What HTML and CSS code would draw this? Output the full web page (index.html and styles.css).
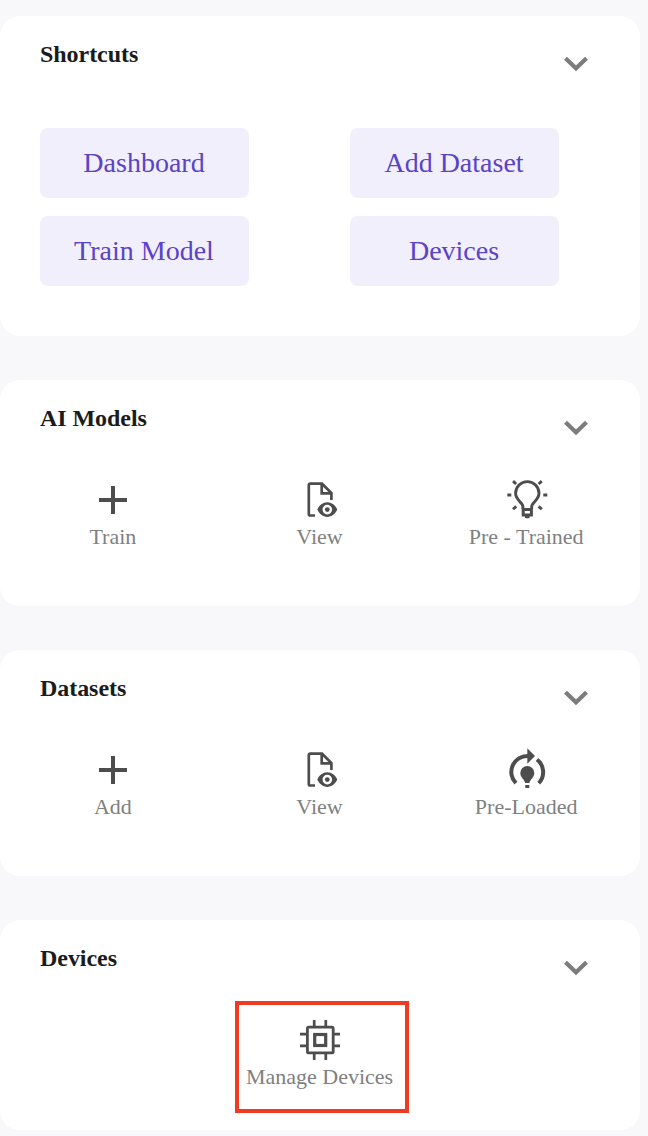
FILE: index.html
```
<!DOCTYPE html>
<html lang="en">
<head>
<meta charset="utf-8">
<title>Home</title>
<link rel="stylesheet" href="styles.css">
</head>
<body>
<svg class="symbols" aria-hidden="true">
  <symbol id="chevron" viewBox="0 0 28 28"><path d="M3.500 8.300l10.500 10L24.500 8.300" fill="none" stroke="#7c7c7c" stroke-width="4.200"/></symbol>
  <symbol id="plus" viewBox="0 0 48 48"><path d="M24 10v28M10 24h28" fill="none" stroke="currentColor" stroke-width="4"/></symbol>
  <symbol id="view" viewBox="0 0 48 48">
    <path d="M19 39.500h-4.600a1.600 1.600 0 0 1-1.600-1.600V9.300a1.600 1.600 0 0 1 1.600-1.600H26L35.400 17v7M25.700 8v9.300h9.600" fill="none" stroke="currentColor" stroke-width="2.700"/>
    <path fill-rule="evenodd" d="M21.300 33.600C23.200 29.200 27 26.300 31.300 26.300s8.100 2.900 10 7.300c-1.900 4.400-5.700 7.300-10 7.300s-8.100-2.900-10-7.300zM31.300 28.800a4.800 4.800 0 1 0 0 9.600a4.800 4.800 0 1 0 0-9.600z" fill="currentColor"/>
    <circle cx="31.300" cy="33.600" r="2.400" fill="currentColor"/>
  </symbol>
  <symbol id="bulb" viewBox="0 0 48 48">
    <path d="M19.900 33v-2.600c0-3.400-7.300-6.500-7.300-13.100a11.700 11.700 0 0 1 23.400 0c0 6.600-7.300 9.700-7.300 13.100V33" fill="none" stroke="currentColor" stroke-width="2.900"/>
    <path d="M20.200 33.500h8.200v5.600h-8.200z" fill="none" stroke="currentColor" stroke-width="3"/>
    <path d="M22 40h4.600v1.200l-1 1h-2.600l-1-1z" fill="currentColor"/>
    <path d="M4.300 19h4M40.300 19h4M10 5.100l3.200 2.900M38.800 5.100l-3.200 2.900M10 33.300l3.200-2.900M38.800 33.300l-3.200-2.900" fill="none" stroke="currentColor" stroke-width="2.900"/>
  </symbol>
  <symbol id="preloaded" viewBox="0 0 48 48">
    <path d="M12.900 37.200A16 16 0 0 1 25 10M34 13.500A16 16 0 0 1 35.700 37.200" fill="none" stroke="currentColor" stroke-width="4"/>
    <path d="M24.300 2.300v15.400L32 10z" fill="currentColor"/>
    <path d="M22.100 37C21.800 33.600 17.300 31.700 17.300 27a7 7 0 0 1 14 0c0 4.700-4.500 6.600-4.800 10zM22.300 39h4v3h-4z" fill="currentColor"/>
  </symbol>
  <symbol id="chip" viewBox="0 0 48 48">
    <rect x="11.400" y="11.100" width="25.800" height="25.800" rx="1.500" fill="none" stroke="currentColor" stroke-width="2.800"/>
    <rect x="18.700" y="18.500" width="11" height="11" fill="none" stroke="currentColor" stroke-width="3.200"/>
    <path d="M18.200 4v6M29.800 4v6M18.200 38v6M29.800 38v6M4 18.200h6M4 29.800h6M38 18.200h6M38 29.800h6" fill="none" stroke="currentColor" stroke-width="2.700"/>
  </symbol>
</svg>
<main class="panels">
  <section class="card card-shortcuts">
    <header class="card-header"><h2>Shortcuts</h2><svg class="chevron"><use href="#chevron"/></svg></header>
    <div class="shortcuts">
      <a class="shortcut">Dashboard</a>
      <a class="shortcut">Add Dataset</a>
      <a class="shortcut">Train Model</a>
      <a class="shortcut">Devices</a>
    </div>
  </section>
  <section class="card">
    <header class="card-header"><h2>AI Models</h2><svg class="chevron"><use href="#chevron"/></svg></header>
    <div class="actions">
      <a class="action"><svg class="icon"><use href="#plus"/></svg><span>Train</span></a>
      <a class="action"><svg class="icon"><use href="#view"/></svg><span>View</span></a>
      <a class="action"><svg class="icon"><use href="#bulb"/></svg><span>Pre - Trained</span></a>
    </div>
  </section>
  <section class="card">
    <header class="card-header"><h2>Datasets</h2><svg class="chevron"><use href="#chevron"/></svg></header>
    <div class="actions">
      <a class="action"><svg class="icon"><use href="#plus"/></svg><span>Add</span></a>
      <a class="action"><svg class="icon"><use href="#view"/></svg><span>View</span></a>
      <a class="action"><svg class="icon"><use href="#preloaded"/></svg><span>Pre-Loaded</span></a>
    </div>
  </section>
  <section class="card card-devices">
    <header class="card-header"><h2>Devices</h2><svg class="chevron"><use href="#chevron"/></svg></header>
    <div class="actions actions-single">
      <a class="action highlighted"><svg class="icon"><use href="#chip"/></svg><span>Manage Devices</span></a>
    </div>
  </section>
</main>
</body>
</html>
```
FILE: styles.css
```
*, *::after { box-sizing: border-box; }
body {
  margin: 0;
  background: #f8f8fb;
  font-family: "Liberation Serif", "Times New Roman", serif;
}
.symbols { position: absolute; width: 0; height: 0; }
.panels {
  display: flex;
  flex-direction: column;
  gap: 44px;
  width: 640px;
  padding: 16px 0 6px;
}
.card {
  height: 226px;
  padding-top: 24px;
  border-radius: 20px;
  background: #fff;
}
.card-shortcuts { height: 320px; }
.card-devices { height: 210px; }
.card-header {
  display: flex;
  justify-content: space-between;
  height: 72px;
  padding: 0 50px 0 40px;
}
.card-shortcuts .card-header { height: 88px; }
.card-header h2 {
  margin: 0;
  font-size: 24px;
  line-height: 28px;
  letter-spacing: -0.05px;
  color: #1b1b1b;
}
.chevron { width: 28px; height: 28px; margin-top: 10px; filter: blur(0.4px); }
.shortcuts {
  display: grid;
  grid-template-columns: 209px 209px;
  gap: 18px 101px;
  padding-left: 40px;
}
.shortcut {
  display: flex;
  align-items: center;
  justify-content: center;
  height: 70px;
  padding-right: 1px;
  border-radius: 8px;
  background: #f1effb;
  color: #5a43c7;
  font-size: 28px;
}
.actions {
  display: grid;
  grid-template-columns: repeat(3, 1fr);
  padding: 0 10px;
}
.actions-single { grid-template-columns: 1fr; justify-items: center; }
.action {
  display: flex;
  flex-direction: column;
  align-items: center;
  color: #808080;
  font-size: 22px;
  line-height: 26px;
}
.action span { padding-right: 1px; }
.icon { width: 48px; height: 48px; color: #4d4d4d; }
.highlighted { position: relative; }
.highlighted::after {
  content: "";
  position: absolute;
  top: -15px;
  left: -11px;
  width: 174px;
  height: 112px;
  border: 4px solid #ee3b24;
}
```
